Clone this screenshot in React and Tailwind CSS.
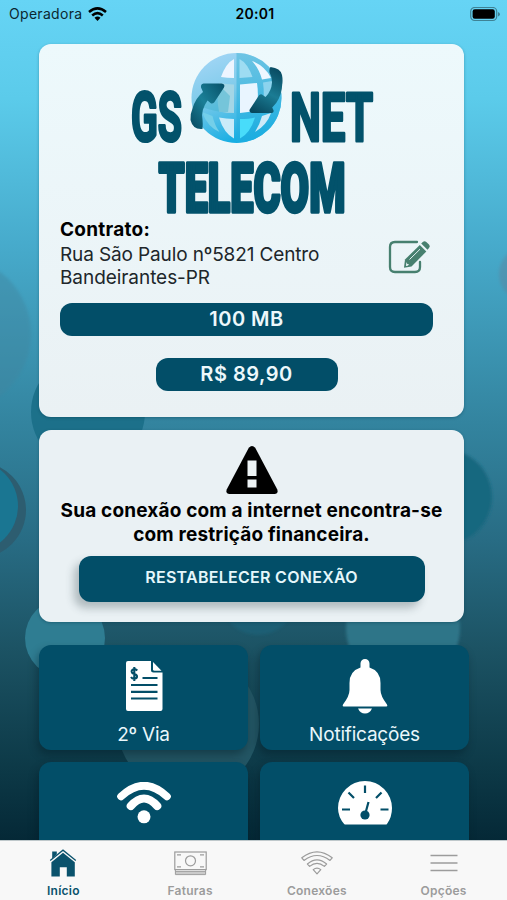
const tabs = [
  { label: "Início", icon: HomeIcon, active: true },
  { label: "Faturas", icon: MoneyIcon },
  { label: "Conexões", icon: WifiOutlineIcon },
  { label: "Opções", icon: MenuIcon },
];

const shortcuts = [
  { id: "invoice", label: "2º Via", icon: InvoiceIcon },
  { id: "notifications", label: "Notificações", icon: BellIcon },
  { id: "wifi", icon: WifiIcon },
  { id: "speed", icon: GaugeIcon },
];

function HomeIcon() {
  return (
    <svg width="28" height="28" viewBox="0 0 28 28" fill="currentColor">
      <path d="M3.2 2.6h4.6v2.6L3.2 9.4z" />
      <path d="M1.2 11.4 14 1.200l12.8 10.200" fill="none" stroke="currentColor" strokeWidth="1.3" />
      <path d="M14 3.8 25.8 13.300v14.300h-8V18.2h-7v9.400H2.4V13.300z" />
    </svg>
  );
}

function MoneyIcon() {
  return (
    <svg width="33" height="25" viewBox="0 0 33 25" fill="none" stroke="currentColor" strokeWidth="1.2">
      <rect x="0.8" y="1" width="31.4" height="17.6" />
      <circle cx="16.5" cy="9.8" r="5" />
      <path d="M3 3.8h4M26 3.8h4M3 15.8h4M26 15.8h4" />
      <path d="M1.4 20.400h30.200M1.4 22h30.200M1.4 23.600h30.200" strokeWidth="1" />
      <path d="M1.4 18.600v5M31.600 18.600v5" strokeWidth="1" />
    </svg>
  );
}

function WifiOutlineIcon() {
  return (
    <svg width="32" height="24" viewBox="0 0 32 24" fill="none" stroke="currentColor" strokeWidth="1.2" strokeLinejoin="round">
      <path d="M.8 6.800Q16-5.200 31.200 6.800l-2.200 2.600Q16-.400 3 9.400z" />
      <path d="M6.4 13Q16 4.600 25.6 13l-2.200 2.400Q16 9.200 8.600 15.400z" />
      <path d="M12.2 18.6q3.8-3 7.6 0L16 22.800z" />
    </svg>
  );
}

function MenuIcon() {
  return (
    <svg width="28" height="18" viewBox="0 0 28 18" stroke="currentColor" strokeWidth="1.4">
      <path d="M.5 1.5h27M.5 9h27M.5 16.5h27" />
    </svg>
  );
}

function InvoiceIcon() {
  return (
    <svg width="38" height="52" viewBox="0 0 38 52" fill="white">
      <path d="M3 1h23v9q0 2.5 2.5 2.5H37.500v36.500q0 2-2 2H3q-2 0-2-2V3q0-2 2-2z" />
      <path d="M28 2 36.500 10.800H29.500q-1.500 0-1.500-1.500z" />
      <path d="M6 25h26.500M6 31.800h26.500M6 38.500h26.500M17.500 18h15" stroke="#024e68" strokeWidth="2.2" />
      <path
        d="M12.300 10.500Q10.500 8.800 8.800 9.200 6.400 9.800 6.700 11.900 7 13.500 9.200 14.100 12.200 14.800 12 16.800 11.700 18.700 9.200 18.700 7 18.700 6 17M9.300 7v14"
        fill="none"
        stroke="#024e68"
        strokeWidth="2.1"
      />
    </svg>
  );
}

function BellIcon() {
  return (
    <svg width="46" height="56" viewBox="0 0 46 56" fill="white">
      <path d="M18.5 9.5V5.5a4.500 4.500 0 0 1 9 0V9.5Q38.5 13 38.5 25V32Q38.5 38 45 46.500q1 2-.500 2H1.500q-1.500 0-.500-2Q7.500 38 7.5 32V25Q7.5 13 18.5 9.5z" />
      <path d="M16 50.5h14Q27.800 55.500 23 55.500T16 50.5z" />
    </svg>
  );
}

function WifiIcon() {
  return (
    <svg width="54" height="42" viewBox="0 0 54 42" fill="none" stroke="white" strokeWidth="7.6" strokeLinecap="round">
      <path d="M4 14.500Q27-7 50 14.500" />
      <path d="M13.800 24Q27 9 40.200 24" strokeWidth="8.200" />
      <circle cx="27" cy="34.800" r="6.500" fill="white" stroke="none" />
    </svg>
  );
}

function GaugeIcon() {
  return (
    <svg width="54" height="44" viewBox="0 0 54 44">
      <path d="M6.500 43.500Q0 36 0 27a27 27 0 0 1 54 0q0 9-5 16-.5.500-1.500.500H7.500q-.700 0-1-.500z" fill="white" />
      <path
        d="M4 28.500h8M42.5 28.500h8M27 4.500V12M10.5 11.500l5.500 5.500M43.5 11.500 38 17M27.500 32l3-11"
        stroke="#024e68"
        strokeWidth="2.2"
      />
      <circle cx="27" cy="34" r="4.6" fill="#024e68" />
    </svg>
  );
}

function EditIcon() {
  return (
    <svg width="43" height="36" viewBox="0 0 43 36" fill="none">
      <path
        d="M29 3H7Q2 3 2 8v20q0 5 5 5h20q5 0 5-5V23"
        stroke="#47806f"
        strokeWidth="2.3"
        strokeLinecap="round"
      />
      <path d="M17 20.500 31.800 6 38.300 12.500 23.500 27.500 16 28.800z" fill="#47806f" />
      <path d="M33.200 4.600l1.600-1.600q1.800-1.600 3.500 0L41 5.600q1.700 1.800 0 3.500L39.500 10.800z" fill="#47806f" />
      <path d="M21.500 20.500 32 10.200" stroke="#e4f1f3" strokeWidth="1" />
      <path d="M18.300 23l.8 1.800 2 .800-1.500 1.200-1.600.200z" fill="#e4f1f3" />
    </svg>
  );
}

function Backdrop() {
  return (
    <svg className="absolute inset-0" width="507" height="900" viewBox="0 0 507 900">
      <defs>
        <linearGradient id="sky" x1="0" y1="0" x2="0" y2="1">
          <stop offset="0" stopColor="#66d4f5" />
          <stop offset="0.11" stopColor="#5bcbea" />
          <stop offset="0.27" stopColor="#47abcc" />
          <stop offset="0.47" stopColor="#33849f" />
          <stop offset="0.6" stopColor="#286c84" />
          <stop offset="0.72" stopColor="#1c5364" />
          <stop offset="0.85" stopColor="#0d3a48" />
          <stop offset="0.94" stopColor="#042735" />
        </linearGradient>
        {/* Soft rim for the bubbles that are out of focus */}
        <filter id="soft">
          <feGaussianBlur stdDeviation="1.5" />
        </filter>
      </defs>
      <rect width="507" height="900" fill="url(#sky)" />
      <circle cx="-47" cy="334" r="78" fill="#3f86a0" opacity="0.45" filter="url(#soft)" />
      <circle cx="527" cy="274" r="28" fill="#607f98" opacity="0.4" filter="url(#soft)" />
      <circle cx="88" cy="412" r="57" fill="#176c85" opacity="0.8" />
      <circle cx="-22" cy="510" r="48" fill="#2d5d70" />
      <circle cx="-28" cy="506" r="46" fill="#1a7692" />
      <circle cx="444" cy="497" r="48" fill="#17687f" filter="url(#soft)" />
      <circle cx="65" cy="638" r="40" fill="#2f7d92" />
      <circle cx="403" cy="628" r="57" fill="#2e7488" filter="url(#soft)" />
      <circle cx="258" cy="598" r="37" fill="#1b667f" opacity="0.5" filter="url(#soft)" />
      <circle cx="188" cy="724" r="71" fill="#275a68" opacity="0.85" />
    </svg>
  );
}

function StatusBar() {
  return (
    <div className="grid h-7 shrink-0 grid-cols-3 items-center pr-1.5 pl-[9px] text-sm text-[#0b2730]">
      <div className="flex items-center gap-1.5">
        <span className="tracking-[0.3px]">Operadora</span>
        <svg width="19" height="14" viewBox="0 0 19 14" fill="none" stroke="black" strokeWidth="2.5">
          <path d="M1 5Q9.500-2.300 18 5" />
          <path d="M4.200 8.500Q9.500 3.800 14.800 8.500" />
          <path d="M6.500 10.700Q9.500 8.300 12.500 10.700L9.500 14z" fill="black" stroke="none" />
        </svg>
      </div>
      <span className="text-center font-semibold tracking-[0.3px] text-black">20:01</span>
      <svg className="justify-self-end" width="31" height="15" viewBox="0 0 31 15">
        <rect x="0.7" y="0.500" width="26" height="13" rx="4" fill="none" stroke="#3e8295" strokeWidth="1.2" />
        <rect x="2.6" y="2.300" width="22.2" height="9.400" rx="2.2" />
        <path d="M28 5v4.500q2-1 2-2.250T28 5z" fill="#3e8295" />
      </svg>
    </div>
  );
}

function Logo() {
  const lettering = {
    fill: "#02526b",
    stroke: "#02526b",
    strokeLinejoin: "round",
    fontFamily: "Roboto, sans-serif",
    lengthAdjust: "spacingAndGlyphs",
  };

  return (
    <svg className="mx-auto shrink-0" width="260" height="176" viewBox="120 44 260 176">
      <defs>
        <linearGradient id="globe" x1="0" y1="0" x2="0.4" y2="1">
          <stop offset="0" stopColor="#a9d8f8" />
          <stop offset="0.5" stopColor="#7fcbea" />
          <stop offset="1" stopColor="#17aee3" />
        </linearGradient>
        <linearGradient id="globeRight" x1="0" y1="0" x2="0" y2="1">
          <stop offset="0" stopColor="#5fbfdf" />
          <stop offset="1" stopColor="#1badE0" />
        </linearGradient>
        <linearGradient id="arrowLeft" x1="1" y1="0" x2="0" y2="1">
          <stop offset="0" stopColor="#075068" />
          <stop offset="0.5" stopColor="#1a7f97" />
          <stop offset="1" stopColor="#07485e" />
        </linearGradient>
        <linearGradient id="arrowRight" x1="0.6" y1="0" x2="0.2" y2="1">
          <stop offset="0" stopColor="#0a4f66" />
          <stop offset="0.5" stopColor="#1b7c94" />
          <stop offset="1" stopColor="#07485e" />
        </linearGradient>
      </defs>
      <text x="131" y="141" fontSize="68.500" fontWeight="700" strokeWidth="3.2" textLength="51" {...lettering}>GS</text>
      <text x="290" y="140.500" fontSize="67.500" fontWeight="700" strokeWidth="3" textLength="83" {...lettering}>NET</text>
      <text x="158.500" y="212" fontSize="68" fontWeight="900" strokeWidth="3.6" textLength="187" {...lettering}>TELECOM</text>

      {/* Globe */}
      <circle cx="236.500" cy="98" r="45" fill="url(#globe)" />
      <path d="M236.500 53a45 45 0 0 1 0 90z" fill="url(#globeRight)" opacity="0.75" />
      <path d="M221 77q5-14 13-18v19q-7 0-13-1z" fill="#edf5ff" />
      <path d="M239.500 59q8 4 13 18l-13 1z" fill="#9edcf2" />
      <path d="M252 61q13 5 19 17l-9 1.500q-3-11-10-18.500z" fill="#eef7ff" />
      <path d="M219 83q7 1 15 1.500v28.500q-8 0-15-1.500-3-14 0-28.500z" fill="#a3d6e6" />
      <path d="M240 84.500 257 83q2 13-.500 28l-16.500 2z" fill="#e9f5ff" />
      <path d="M263 82.500l9-1.500q4 12 0 26l-10 3q3-14 1-27.500z" fill="#8cd3ee" />
      <path d="M219 117.500q7 1 15 1.500v19.500q-10-5-15-21z" fill="#c9ebf9" />
      <path d="M240 119q9 0 15-1.500-5 16-15 21z" fill="#48dcfa" />
      <path d="M202 112l10.500 4q2 9 7 16-12-5-17.500-20z" fill="#74cfe9" />
      <path d="M262 116l9-3q-4 12-16 19 5-8 7-16z" fill="#cdeaf8" />
      <path d="M222 88l8 8-2 16q-10 1-26-5l6-8 5 5z" fill="#47b3cd" opacity="0.5" />
      <path
        d="M202.500 129q-9.500 1-12-9-.500-6 2-11.500 3-10.500 10.500-16.500l-2-4.500q-.500-3.500 2.500-4h18q4 .500 2.500 4l-9.500 14.500q-2 2.500-4 1l-3-2.500q-7 10-5 19 .500 5 0 9.500z"
        fill="url(#arrowLeft)"
      />
      <path
        d="M270.500 67q10 1 11.500 8 1 5 .200 9.500-.200 10-6 18.500l-4 4.500q1 1.500 1.500 3.500-.200 1.800-2 2h-20q-3-1-2-3.500l9.500-14.500q2-1.500 3.500 0l2.800 2q6-6 6.500-14.500 0-6-2.500-10-.500-4 1-5.500z"
        fill="url(#arrowRight)"
      />
    </svg>
  );
}

function ContractCard() {
  return (
    <section className="flex h-[373px] w-[425px] shrink-0 flex-col rounded-xl bg-linear-to-b from-[#edf9fc] to-[#eaf1f4] pr-[31px] pl-[21px] shadow-[0_1px_3px_rgba(0,50,70,0.35)]">
      <div className="-mx-1 flex h-[174px] justify-center pl-[6px]">
        <Logo />
      </div>
      <div className="flex justify-between">
        <div className="text-[19px] leading-[23.5px] text-[#20262a]">
          <h2 className="mb-[1px] font-bold tracking-[0.25px] text-black">Contrato:</h2>
          <p className="tracking-[-0.13px]">Rua São Paulo nº5821 Centro</p>
          <p className="tracking-[-0.06px]">Bandeirantes-PR</p>
        </div>
        <div className="pt-[21px] pr-0.5">
          <EditIcon />
        </div>
      </div>
      <div className="mt-[13px] flex h-[33px] items-center justify-center rounded-xl bg-[#024e68] text-xl font-semibold text-[#edf8fb]">
        <span className="tracking-[0.5px]">100 MB</span>
      </div>
      <div className="mx-auto mt-[22px] flex h-[33px] w-[182px] items-center justify-center rounded-xl bg-[#024e68] text-xl font-semibold text-[#edf8fb]">
        <span className="tracking-[0.5px]">R$ 89,90</span>
      </div>
    </section>
  );
}

function RestrictionCard() {
  return (
    <section className="mt-[13px] flex h-[192px] w-[425px] shrink-0 flex-col items-center rounded-xl bg-[#eaf1f4] pt-4 shadow-[0_1px_3px_rgba(0,50,70,0.35)]">
      <svg width="52" height="48" viewBox="0 0 52 48">
        <path d="M22.8 1.8q3.200-3.600 6.400 0L51.300 43.500q1.200 4.300-2.800 4.500h-45q-4-.200-2.800-4.500z" />
        <path d="M21.5 14.500h9V30h-9zM21.5 33.500h9v8h-9z" fill="#edf3f5" />
      </svg>
      <p className="mt-[5px] text-center text-[19px] leading-[23.5px] font-bold tracking-[0.17px] whitespace-nowrap text-black">
        Sua conexão com a internet encontra-se
        <br />
        com restrição financeira.
      </p>
      <button className="mt-[10px] h-[46px] w-[346px] rounded-xl bg-[#024e68] pb-1 text-base font-semibold tracking-[0.28px] text-[#e5f7fb] shadow-[-5px_6px_8px_rgba(40,60,65,0.3)]">
        RESTABELECER CONEXÃO
      </button>
    </section>
  );
}

function Shortcut({ label, icon: Icon }) {
  return (
    <button className="flex h-[105px] flex-col items-center rounded-xl bg-[#024e68] text-[#e9f7fb] shadow-[-2px_5px_9px_rgba(0,25,35,0.4)]">
      <div className="flex h-[81px] items-center justify-center">
        <Icon />
      </div>
      {label && <span className="-mt-[3px] text-[19px] leading-6 tracking-[-0.2px]">{label}</span>}
    </button>
  );
}

function TabBar() {
  return (
    <nav className="relative grid h-[60px] shrink-0 grid-cols-4 border-t border-[#bfc8cb] bg-[#f8f8f8]">
      {tabs.map(({ label, icon: Icon, active }) => (
        <div
          key={label}
          className={`flex flex-col items-center ${active ? "text-[#0a526c]" : "text-[#9c9c9c]"}`}
        >
          <div className="flex h-[42px] items-center pt-[2px]">
            <Icon />
          </div>
          <span className="text-xs leading-4 font-semibold tracking-[0.25px]">{label}</span>
        </div>
      ))}
    </nav>
  );
}

export default function App() {
  return (
    <div className="relative flex h-[900px] w-[507px] flex-col overflow-hidden font-['Inter',sans-serif]">
      <Backdrop />
      <div className="relative flex min-h-0 flex-1 flex-col overflow-hidden">
        <StatusBar />
        <main className="flex flex-col pt-4 pl-[39px]">
          <ContractCard />
          <RestrictionCard />
          <div className="mt-[23px] grid w-[430px] grid-cols-2 gap-x-3 gap-y-[12px]">
            {shortcuts.map((item) => (
              <Shortcut key={item.id} label={item.label} icon={item.icon} />
            ))}
          </div>
        </main>
      </div>
      <TabBar />
    </div>
  );
}
